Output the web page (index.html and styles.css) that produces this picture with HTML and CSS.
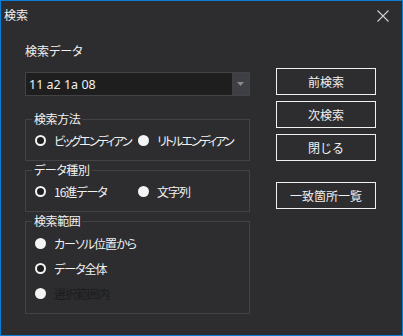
FILE: index.html
```html
<!DOCTYPE html>
<html lang="ja">
<head>
  <meta charset="UTF-8" />
  <title>検索</title>
  <link rel="stylesheet" href="styles.css">
</head>
<body>
  <div class="window">
    <div class="titlebar">
      <span class="title">検索</span>
      <svg class="close" width="12" height="12" viewBox="0 0 12 12">
        <path d="M0.5 0.5 L11.5 11.5 M11.5 0.5 L0.5 11.5" stroke="#d0d0d0" stroke-width="1.1" fill="none" />
      </svg>
    </div>
    <div class="content">
      <div class="left">
        <div class="field-label">検索データ</div>
        <div class="combo">
          <span class="combo-text">11 a2 1a 08</span>
          <span class="combo-drop">
            <svg width="7" height="4" viewBox="0 0 7 4"><path d="M0 0 H7 L3.5 4 Z" fill="#8a8a8a" /></svg>
          </span>
        </div>

        <fieldset class="group">
          <legend>検索方法</legend>
          <div class="row cols">
            <label class="radio first tight"><span class="dot ring"></span>ビッグエンディアン</label>
            <label class="radio tight"><span class="dot fill"></span>リトルエンディアン</label>
          </div>
        </fieldset>

        <fieldset class="group">
          <legend>データ種別</legend>
          <div class="row cols">
            <label class="radio first"><span class="dot ring"></span>16進データ</label>
            <label class="radio"><span class="dot fill"></span>文字列</label>
          </div>
        </fieldset>

        <fieldset class="group range">
          <legend>検索範囲</legend>
          <div class="row"><label class="radio"><span class="dot fill"></span>カーソル位置から</label></div>
          <div class="row"><label class="radio"><span class="dot ring"></span>データ全体</label></div>
          <div class="row"><label class="radio disabled"><span class="dot fill"></span>選択範囲内</label></div>
        </fieldset>
      </div>

      <div class="right">
        <button class="btn">前検索</button>
        <button class="btn">次検索</button>
        <button class="btn">閉じる</button>
        <button class="btn spaced">一致箇所一覧</button>
      </div>
    </div>
  </div>
</body>
</html>
```

FILE: styles.css
```css
body {
  margin: 0;
  background: #2d2d30;
  font-family: "Noto Sans CJK JP", "Noto Sans", sans-serif;
  font-size: 12px;
  color: #f1f1f1;
}
.window {
  width: 403px;
  height: 336px;
  box-sizing: border-box;
  border: 1px solid #0a7fd8;
  background: #2d2d30;
}
.titlebar {
  height: 29px;
  display: flex;
  justify-content: space-between;
  align-items: flex-start;
  padding: 6px 13px 0 3px;
  box-sizing: border-box;
}
.title {
  line-height: 16px;
  font-size: 12px;
}
.close {
  margin-top: 3px;
}
.content {
  display: flex;
  padding-left: 24px;
  gap: 26px;
}
.left {
  width: 225px;
}
.field-label {
  margin-top: 13px;
  line-height: 16px;
  font-feature-settings: "palt";
}
.combo {
  margin-top: 13px;
  height: 24px;
  box-sizing: border-box;
  border: 1px solid #434346;
  background: #1e1e1e;
  display: flex;
  align-items: center;
}
.combo-text {
  flex: 1;
  padding-left: 3px;
  font-size: 12.5px;
  font-family: "Noto Sans", "Noto Sans CJK JP", sans-serif;
  color: #f1f1f1;
}
.combo-drop {
  width: 17px;
  height: 22px;
  background: #3f3f46;
  display: flex;
  align-items: center;
  justify-content: center;
}
.group {
  margin: 1px 0 0;
  padding: 0 8px 12px 9px;
  border: 1px solid #434346;
  min-width: 0;
}
.left .combo + .group {
  margin-top: 15px;
}
.group legend {
  padding: 0 2px;
  margin-left: -3px;
  line-height: 16px;
  letter-spacing: -0.4px;
  font-feature-settings: "palt";
}
.group .row {
  height: 16px;
  margin-top: 5px;
  display: flex;
  align-items: center;
}
.group.range .row {
  margin-top: 9px;
}
.group.range .row:first-of-type {
  margin-top: 6px;
}
.radio {
  display: flex;
  align-items: center;
  gap: 7px;
  white-space: nowrap;
  letter-spacing: -1px;
  font-feature-settings: "palt";
}
.radio .dot {
  margin-right: 1px;
}
.radio.tight {
  letter-spacing: -2px;
}
.radio.first {
  width: 103px;
}
.radio.disabled {
  color: #1c1c1c;
}
.dot {
  width: 11px;
  height: 11px;
  border-radius: 50%;
  box-sizing: border-box;
  flex: none;
}
.dot.ring {
  border: 2px solid #f4f4f4;
  background: #1e1e1e;
}
.dot.fill {
  background: #f4f4f4;
}
.right {
  width: 100px;
  padding-top: 38px;
  display: flex;
  flex-direction: column;
  gap: 6px;
}
.btn {
  height: 27px;
  width: 100px;
  border: 1px solid #f0f0f0;
  background: transparent;
  color: #f1f1f1;
  font-family: inherit;
  font-size: 12px;
  padding: 0;
}
.btn.spaced {
  margin-top: 15px;
}
```
